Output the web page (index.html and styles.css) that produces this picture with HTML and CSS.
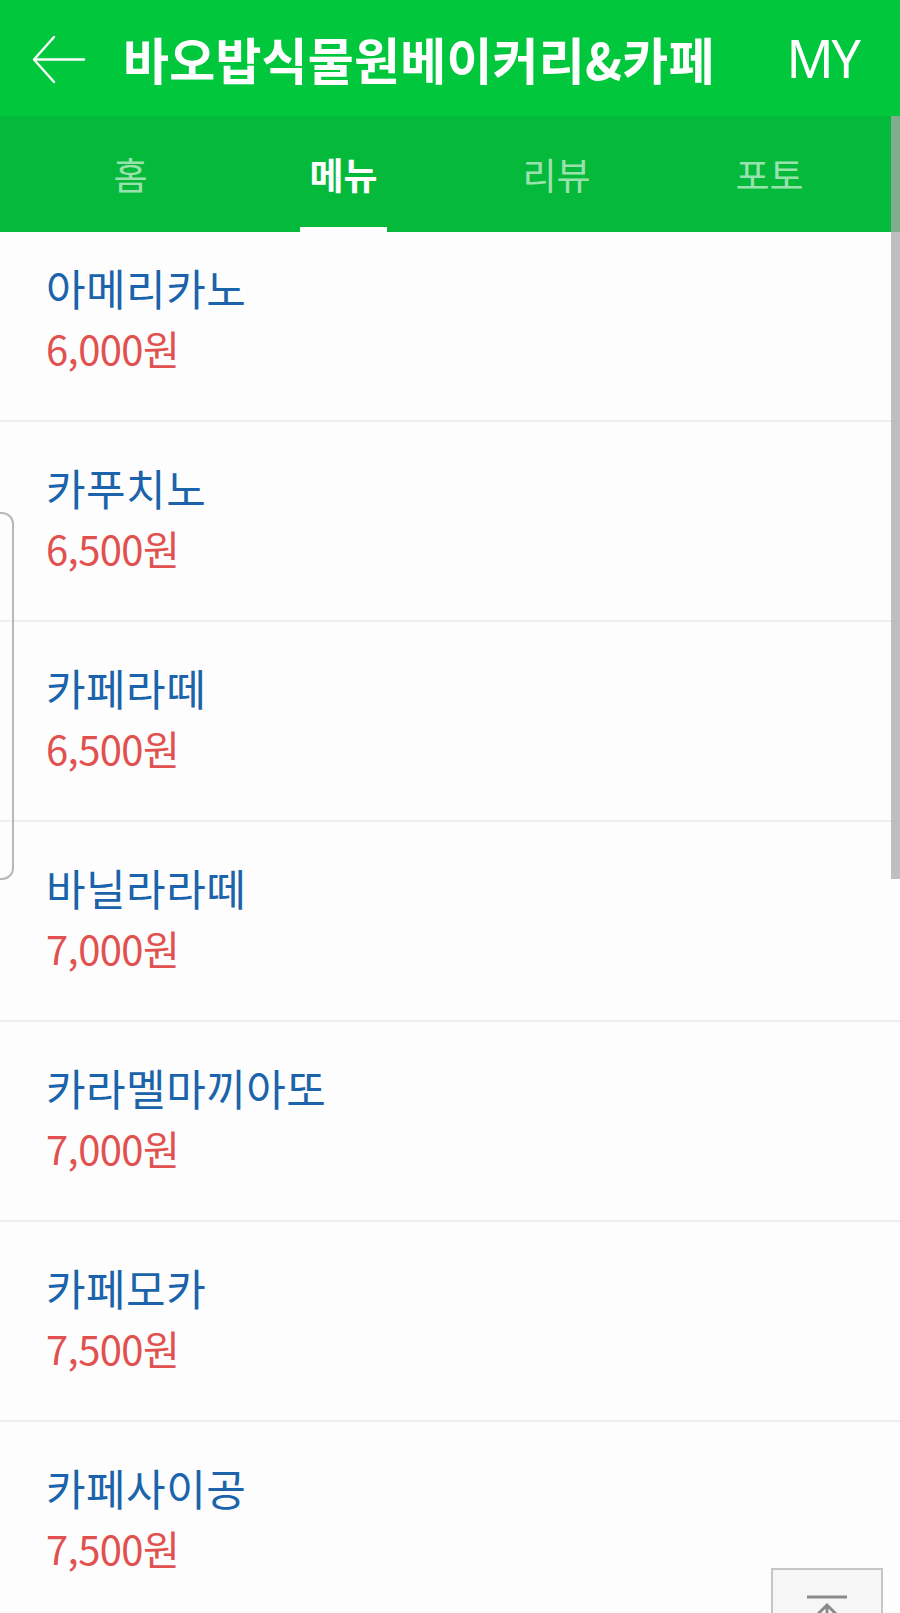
FILE: index.html
```html
<!DOCTYPE html>
<html lang="ko">
<head>
<meta charset="utf-8">
<title>바오밥식물원베이커리&amp;카페 - 메뉴</title>
<link rel="stylesheet" href="styles.css">
</head>
<body>
<div class="page">
  <header class="header">
    <svg class="back" width="56" height="52" viewBox="0 0 56 52" aria-hidden="true">
      <path d="M22 3 L2 25.5 L22 48 M2 25.5 L52 25.5" fill="none" stroke="#ffffff" stroke-width="2.4" stroke-linecap="round" stroke-linejoin="round"/>
    </svg>
    <h1 class="title">바오밥식물원베이커리&amp;카페</h1>
    <span class="my">MY</span>
  </header>
  <nav class="tabs">
    <a class="tab">홈</a>
    <a class="tab active">메뉴</a>
    <a class="tab">리뷰</a>
    <a class="tab">포토</a>
  </nav>
  <ul class="menu">
    <li class="item first"><div class="name">아메리카노</div><div class="price">6,000원</div></li>
    <li class="item"><div class="name">카푸치노</div><div class="price">6,500원</div></li>
    <li class="item"><div class="name">카페라떼</div><div class="price">6,500원</div></li>
    <li class="item"><div class="name">바닐라라떼</div><div class="price">7,000원</div></li>
    <li class="item"><div class="name">카라멜마끼아또</div><div class="price">7,000원</div></li>
    <li class="item"><div class="name">카페모카</div><div class="price">7,500원</div></li>
    <li class="item"><div class="name">카페사이공</div><div class="price">7,500원</div></li>
  </ul>
  <div class="scrollbar"></div>
  <div class="edge-handle"></div>
  <button class="to-top" aria-label="맨 위로">
    <svg width="44" height="40" viewBox="0 0 44 40" aria-hidden="true">
      <path d="M2 2 L42 2" stroke="#8a8a8a" stroke-width="3" fill="none"/>
      <path d="M22 11 L22 40 M10 22 L22 10 L34 22" stroke="#8a8a8a" stroke-width="3" fill="none" stroke-linejoin="miter"/>
    </svg>
  </button>
</div>
</body>
</html>
```
FILE: styles.css
```css
html, body {
  margin: 0;
  padding: 0;
}
body {
  width: 900px;
  height: 1613px;
  overflow: hidden;
  background: #fdfdfd;
  font-family: "Noto Sans CJK KR", "Noto Sans", sans-serif;
}
.page {
  position: relative;
  width: 900px;
  height: 1613px;
  overflow: hidden;
}
.header {
  height: 116px;
  background: #00c73c;
  display: flex;
  align-items: center;
  padding: 0 41px 0 32px;
  box-sizing: border-box;
  color: #ffffff;
}
.back {
  flex: none;
  display: block;
  margin-top: 4px;
}
.title {
  margin: 0 0 0 35px;
  flex: 1;
  font-size: 50px;
  font-weight: 700;
  letter-spacing: 0.2px;
  line-height: 1;
  white-space: nowrap;
}
.my {
  font-family: "Noto Sans", sans-serif;
  font-size: 52px;
  font-weight: 400;
  letter-spacing: -2px;
  line-height: 1;
}
.tabs {
  height: 116px;
  background: #05b93a;
  display: grid;
  grid-template-columns: repeat(4, 213px);
  padding: 0 24px;
  box-sizing: border-box;
}
.tab {
  position: relative;
  display: flex;
  align-items: center;
  justify-content: center;
  font-size: 37px;
  color: rgba(255, 255, 255, 0.62);
  letter-spacing: 0;
}
.tab.active {
  color: #ffffff;
  font-weight: 700;
}
.tab.active::after {
  content: "";
  position: absolute;
  left: 63px;
  bottom: 0;
  width: 87px;
  height: 5px;
  background: #ffffff;
}
.menu {
  list-style: none;
  margin: 0;
  padding: 0;
}
.item {
  height: 200px;
  box-sizing: border-box;
  padding: 35px 0 0 46px;
  border-bottom: 2px solid #efefef;
  background: #fdfdfd;
}
.item.first {
  height: 190px;
  padding-top: 25px;
}
.name {
  font-size: 43px;
  line-height: 60px;
  color: #1b63aa;
  letter-spacing: 0.5px;
}
.price {
  font-size: 40px;
  line-height: 62px;
  color: #e0514f;
  letter-spacing: -0.6px;
}
.scrollbar {
  position: absolute;
  right: 0;
  top: 116px;
  width: 9px;
  height: 763px;
  background: rgba(170, 170, 170, 0.75);
}
.edge-handle {
  position: absolute;
  left: -22px;
  top: 512px;
  width: 32px;
  height: 364px;
  border: 2px solid #b8b8b8;
  border-radius: 12px;
}
.to-top {
  position: absolute;
  left: 771px;
  top: 1568px;
  width: 112px;
  height: 70px;
  margin: 0;
  padding: 25px 0 0 0;
  box-sizing: border-box;
  background: #f6f6f6;
  border: 2px solid #c6c6c6;
  display: flex;
  justify-content: center;
  align-items: flex-start;
}
.to-top svg {
  display: block;
}
```
